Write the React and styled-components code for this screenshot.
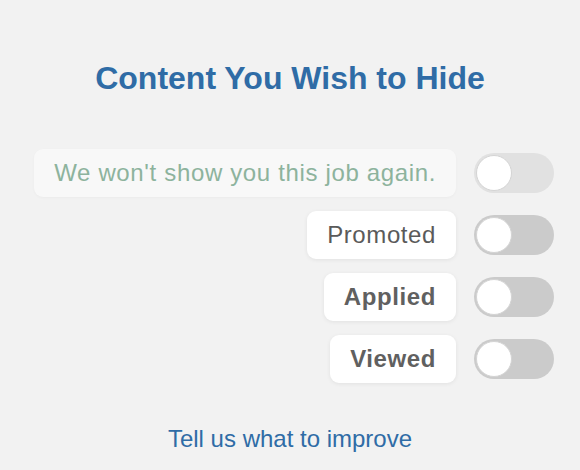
import React from 'react';
import styled, { createGlobalStyle } from 'styled-components';

const GlobalStyle = createGlobalStyle`
  html, body {
    margin: 0;
    padding: 0;
    background: #f2f2f2;
  }
  body {
    font-family: 'Liberation Sans', Arial, Helvetica, sans-serif;
  }
`;

const filters = [
  { label: 'Promoted', bold: false },
  { label: 'Applied', bold: true },
  { label: 'Viewed', bold: true },
];

function App() {
  return (
    <>
      <GlobalStyle />
      <Page>
        <Title>Content You Wish to Hide</Title>
        <List>
          <Row>
            <Label muted>We won't show you this job again.</Label>
            <Switch disabled />
          </Row>
          {filters.map((f) => (
            <Row key={f.label}>
              <Label bold={f.bold}>{f.label}</Label>
              <Switch />
            </Row>
          ))}
        </List>
        <Feedback href="#">Tell us what to improve</Feedback>
      </Page>
    </>
  );
}

function Switch({ disabled }) {
  return (
    <Track $disabled={disabled}>
      <Knob />
    </Track>
  );
}

export default App;

const Page = styled.div`
  width: 580px;
  height: 470px;
  display: flex;
  flex-direction: column;
  align-items: center;
  box-sizing: border-box;
  padding-top: 58px;
`;

const Title = styled.h1`
  margin: 0;
  font-size: 32px;
  line-height: 40px;
  font-weight: 700;
  color: #2f6ca6;
`;

const List = styled.div`
  align-self: stretch;
  display: flex;
  flex-direction: column;
  align-items: flex-end;
  gap: 14px;
  margin-top: 51px;
  padding-right: 26px;
`;

const Row = styled.div`
  display: flex;
  align-items: center;
  gap: 18px;
`;

const Label = styled.div.withConfig({
  shouldForwardProp: (p) => p !== 'muted' && p !== 'bold',
})`
  height: 48px;
  display: flex;
  align-items: center;
  padding: 0 20px;
  box-sizing: border-box;
  border-radius: 9px;
  font-size: 24px;
  letter-spacing: ${({ bold, muted }) => (bold ? '0.6px' : muted ? '0.65px' : '0.6px')};
  font-weight: ${({ bold }) => (bold ? 700 : 400)};
  color: ${({ muted, bold }) => (muted ? '#8db39d' : bold ? '#606060' : '#5a5a5a')};
  background: ${({ muted }) => (muted ? '#f8f8f8' : '#ffffff')};
  box-shadow: ${({ muted }) =>
    muted ? '0 1px 3px rgba(0, 0, 0, 0.03)' : '0 1px 4px rgba(0, 0, 0, 0.07)'};
`;

const Track = styled.div`
  width: 80px;
  height: 40px;
  border-radius: 20px;
  box-sizing: border-box;
  padding: 2px;
  display: flex;
  align-items: center;
  background: ${({ $disabled }) => ($disabled ? '#e1e1e1' : '#cbcbcb')};
`;

const Knob = styled.div`
  width: 36px;
  height: 36px;
  border-radius: 50%;
  box-sizing: border-box;
  background: #fff;
  border: 1.5px solid #d4d4d4;
`;

const Feedback = styled.a`
  margin-top: 42px;
  font-size: 24px;
  color: #2f6ca6;
  text-decoration: none;
`;
